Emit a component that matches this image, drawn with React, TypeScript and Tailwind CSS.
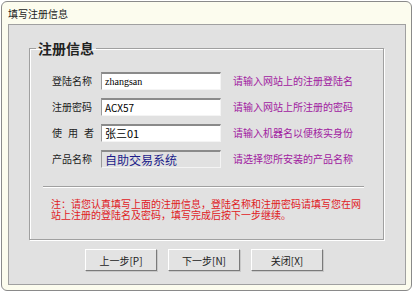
import React from "react";

const font = { fontFamily: '"Noto Sans CJK SC", "Liberation Sans", sans-serif' };

function Row({ label, value, hint, valueClass, spaced, gray }: { label: string; value: string; hint: string; valueClass: string; spaced?: boolean; gray?: boolean }) {
  return (
    <div className="flex items-center h-[18px]">
      <div className={`w-[49px] text-[10px] leading-[10px] text-[#222] ${spaced ? "tracking-[6px]" : ""}`}>{label}</div>
      <div
        className={`w-[120px] h-[18px] flex items-center pl-[3px] border-t-2 border-l border-b border-r border-t-[#8a8a8a] border-l-[#9a9a9a] border-b-[#f4f4f4] border-r-[#f4f4f4] ${gray ? "bg-[#e1e1e1]" : "bg-white"}`}
      >
        <span className={valueClass}>{value}</span>
      </div>
      <div className="ml-[12px] text-[10px] leading-[10px] text-[#a020a0]">{hint}</div>
    </div>
  );
}

function Btn({ children }: { children: React.ReactNode }) {
  return (
    <div className="w-[72px] h-[22px] flex items-center justify-center text-[10px] text-[#222] bg-[#e3e3e3] border border-t-white border-l-white border-b-[#7a7a7a] border-r-[#7a7a7a] shadow-[1px_1px_0_#c8c8c8]">
      {children}
    </div>
  );
}

export default function App() {
  return (
    <div className="w-[414px] h-[292px] bg-white pt-[1px] pl-[1px]" style={font}>
      <div className="w-[411px] h-[290px] border border-[#8a8a8a] rounded-[6px] bg-[#fcfcee] flex flex-col">
        <div className="h-[22px] flex items-center pl-[6px] text-[10px] text-[#222]">填写注册信息</div>
        <div className="ml-[6px] w-[398px] h-[261px] border border-[#a0a0a0] bg-[#e1e1e1] flex flex-col">
          <fieldset className="ml-[20px] mt-[16px] w-[355px] h-[199px] border border-[#a0a0a0] shadow-[inset_1px_1px_0_#fff,1px_1px_0_#fff] pl-[22px] pt-[17px] flex flex-col">
            <legend className="-ml-[16px] px-[2px] text-[14px] leading-[14px] font-bold text-[#222]">注册信息</legend>
            <div className="flex flex-col gap-[8px]">
              <Row label="登陆名称" value="zhangsan" hint="请输入网站上的注册登陆名" valueClass="text-[10px] text-black font-['Liberation_Serif',serif]" />
              <Row label="注册密码" value="ACX57" hint="请输入网站上所注册的密码" valueClass="text-[10px] text-black" />
              <Row label="使用者" value="张三01" hint="请输入机器名以便核实身份" valueClass="text-[11px] text-black" spaced />
              <Row label="产品名称" value="自助交易系统" hint="请选择您所安装的产品名称" valueClass="text-[12px] text-[#1c1c8a]" gray />
            </div>
            <div className="-ml-[9px] mt-[18px] w-[321px] h-[2px] border-t border-t-[#a0a0a0] border-b border-b-white" />
            <div className="mt-[11px] -ml-[1px] flex flex-col gap-[1px] text-[10px] leading-[10px] text-[#e0201e]">
              <div>注：请您认真填写上面的注册信息，登陆名称和注册密码请填写您在网</div>
              <div>站上注册的登陆名及密码，填写完成后按下一步继续。</div>
            </div>
          </fieldset>
          <div className="mt-[9px] ml-[76px] flex gap-[11px]">
            <Btn>上一步[P]</Btn>
            <Btn>下一步[N]</Btn>
            <Btn>关闭[X]</Btn>
          </div>
        </div>
      </div>
    </div>
  );
}
